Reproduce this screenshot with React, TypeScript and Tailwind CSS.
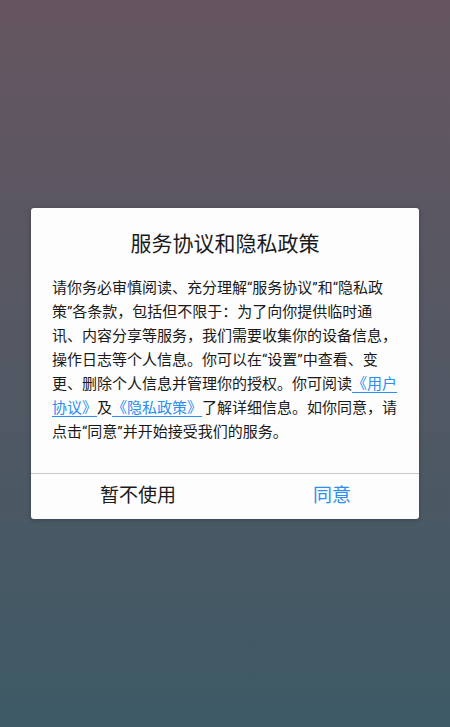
import React from 'react';

const FONT = "font-['Roboto','Noto_Sans_CJK_SC',sans-serif]";

const Link = ({ children }: { children: React.ReactNode }) => (
  <a href="#" className="text-[#2b8ef0] underline decoration-[#2b8ef0] underline-offset-[3px]">
    {children}
  </a>
);

export default function App() {
  return (
    <div
      lang="zh-CN"
      className={`${FONT} h-screen w-full flex items-center justify-center bg-gradient-to-b from-[#655560] to-[#3d5a66]`}
    >
      <div className="w-[388px] bg-[#fdfdfd] rounded-[3px] shadow-[0_1px_4px_rgba(0,0,0,0.25)] overflow-hidden">
        <div className="px-[21px] pt-[22px] pb-[29px]">
          <h2 className="text-center text-[21px] leading-[28px] text-[#1a1a1a]">服务协议和隐私政策</h2>
          <p className="mt-[18px] text-[15px] leading-[24px] text-[#1a1a1a] whitespace-nowrap">
            请你务必审慎阅读、充分理解“服务协议”和“隐私政<br />
            策”各条款，包括但不限于：为了向你提供临时通<br />
            讯、内容分享等服务，我们需要收集你的设备信息，<br />
            操作日志等个人信息。你可以在“设置”中查看、变<br />
            更、删除个人信息并管理你的授权。你可阅读<Link>《用户<br />协议》</Link>及<Link>《隐私政策》</Link>了解详细信息。如你同意，请<br />
            点击“同意”并开始接受我们的服务。
          </p>
        </div>
        <div className="grid grid-cols-2 h-[46px] border-t border-[#c8c8c8]">
          <button className="pl-[20px] text-[19px] text-[#1a1a1a]">暂不使用</button>
          <button className="pl-[20px] text-[19px] text-[#2b8ef0]">同意</button>
        </div>
      </div>
    </div>
  );
}
